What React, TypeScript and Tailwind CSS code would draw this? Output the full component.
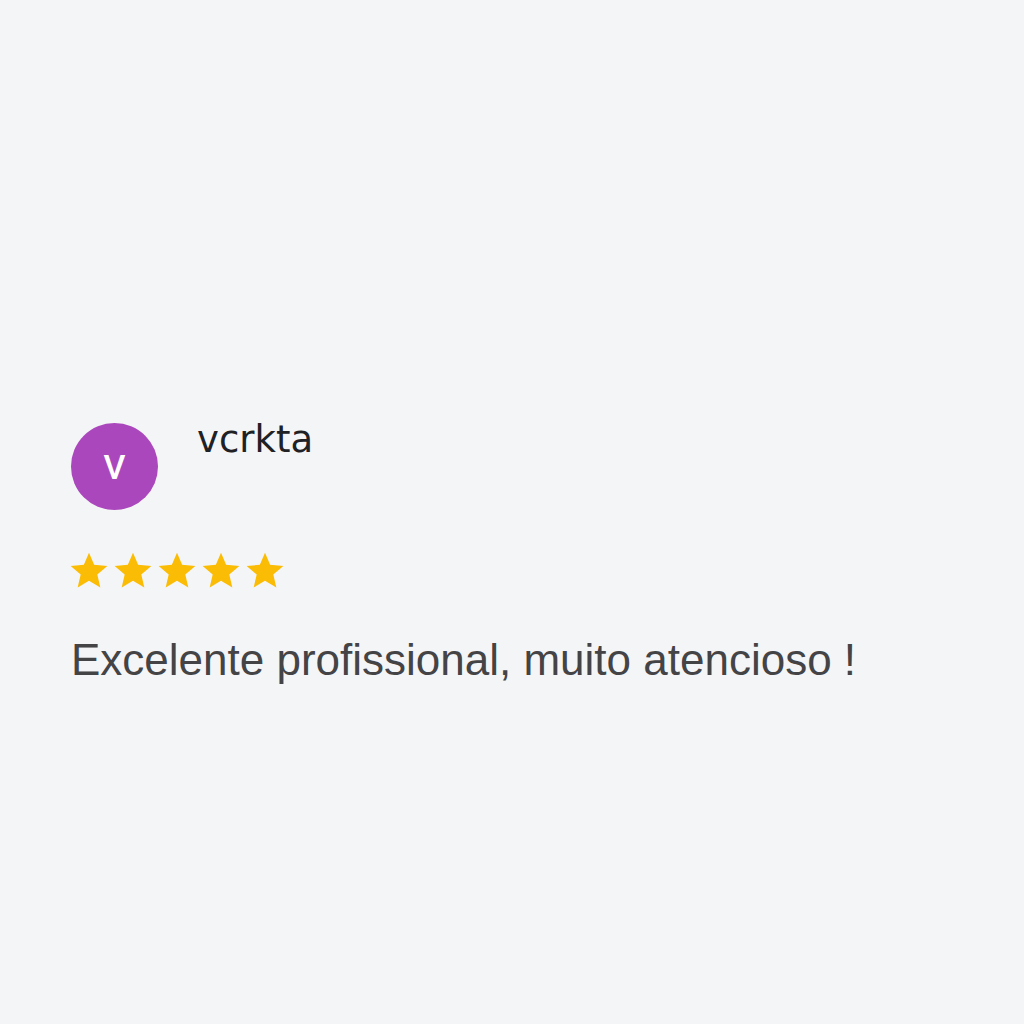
const stars = [0, 1, 2, 3, 4]

function Star() {
  return (
    <svg viewBox="0 0 24 24" className="h-[44px] w-[44px]" fill="#fbbc05">
      <path d="M12 17.27L18.18 21l-1.64-7.03L22 9.24l-7.19-.61L12 2 9.19 8.63 2 9.24l5.46 4.73L5.82 21z" />
    </svg>
  )
}

export default function App() {
  return (
    <div
      className="min-h-[1024px] w-full bg-[#f4f5f7] pl-[71px] pt-[423px]"
      style={{ fontFamily: '"Liberation Sans", Arial, sans-serif' }}
    >
      <div className="flex items-start gap-[39px]">
        <div
          className="flex h-[87px] w-[87px] items-center justify-center rounded-full bg-[#ab47bc] text-white"
          style={{ fontFamily: 'Roboto, "Liberation Sans", sans-serif' }}
        >
          <span className="text-[34px] leading-none font-medium">V</span>
        </div>
        <p
          className="-mt-[5px] text-[37px] leading-[44px] text-[#202124]"
          style={{ fontFamily: '"DejaVu Sans", sans-serif' }}
        >
          vcrkta
        </p>
      </div>
      <div className="-ml-[3.7px] mt-[39.3px] flex">
        {stars.map((i) => (
          <Star key={i} />
        ))}
      </div>
      <p className="mt-[41.7px] text-[44px] leading-[50px] text-[#444446]">
        Excelente profissional, muito atencioso !
      </p>
    </div>
  )
}
